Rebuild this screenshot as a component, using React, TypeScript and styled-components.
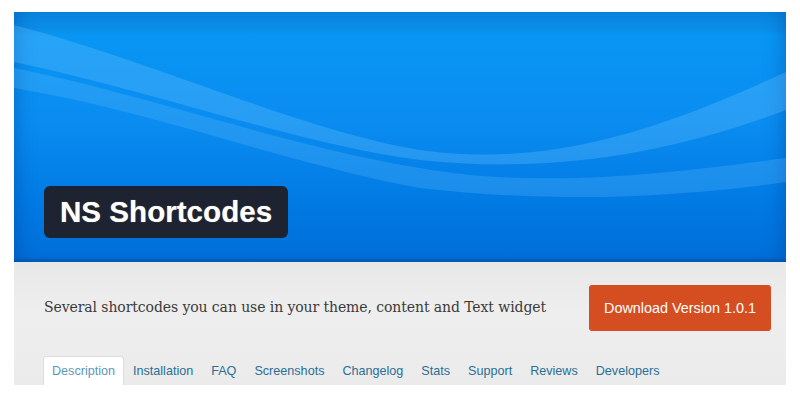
import styled, { createGlobalStyle } from "styled-components";

const GlobalStyle = createGlobalStyle`
  body {
    margin: 0;
    background: #ffffff;
    font-family: "Liberation Sans", Arial, sans-serif;
  }
`;

const tabs = [
  "Description",
  "Installation",
  "FAQ",
  "Screenshots",
  "Changelog",
  "Stats",
  "Support",
  "Reviews",
  "Developers",
];

export default function App() {
  return (
    <>
      <GlobalStyle />
      <Page>
        <Banner>
          <Waves viewBox="0 0 772 250" preserveAspectRatio="none">
            <path
              d="M0,13 C136,48 286,118 406,138 C546,158 666,108 772,60 L772,98 C666,138 546,163 406,148 C286,133 136,78 0,50 Z"
              fill="rgba(120,200,255,0.28)"
            />
            <path
              d="M0,56 C136,83 266,133 406,156 C526,178 666,160 772,146 L772,170 C666,185 546,192 406,176 C266,150 136,98 0,76 Z"
              fill="rgba(120,200,255,0.22)"
            />
          </Waves>
          <TitleBox>NS Shortcodes</TitleBox>
        </Banner>
        <Panel>
          <InfoRow>
            <Summary>
              Several shortcodes you can use in your theme, content and Text
              widget
            </Summary>
            <DownloadButton>Download Version 1.0.1</DownloadButton>
          </InfoRow>
          <Tabs>
            {tabs.map((t, i) => (
              <Tab key={t} $active={i === 0}>
                {t}
              </Tab>
            ))}
          </Tabs>
        </Panel>
      </Page>
    </>
  );
}

const Page = styled.div`
  width: 772px;
  padding: 12px 14px;
`;

const Banner = styled.div`
  position: relative;
  height: 250px;
  overflow: hidden;
  display: flex;
  flex-direction: column;
  justify-content: flex-end;
  align-items: flex-start;
  padding: 0 0 24px 30px;
  box-sizing: border-box;
  background: linear-gradient(
    to bottom,
    #0a88e0 0px,
    #0a8ce6 16px,
    #0896f4 24px,
    #0a8cf0 110px,
    #0078e2 200px,
    #006fd8 246px,
    #005fb8 248px,
    #005fb8 250px
  );
  box-shadow: inset 14px 0 18px -10px rgba(0, 60, 150, 0.35),
    inset -14px 0 18px -10px rgba(0, 60, 150, 0.35);
`;

const Waves = styled.svg`
  position: absolute;
  left: 0;
  top: 0;
  width: 100%;
  height: 100%;
`;

const TitleBox = styled.div`
  position: relative;
  height: 52px;
  display: flex;
  align-items: center;
  padding: 0 16px;
  border-radius: 6px;
  background: #1d2331;
  color: #ffffff;
  font-family: "Liberation Sans", Arial, sans-serif;
  font-weight: 700;
  font-size: 29.6px;
  text-shadow: 0 0 1px rgba(255, 230, 180, 0.6);
`;

const Panel = styled.div`
  height: 123px;
  background: linear-gradient(to bottom, #e8e8e8, #eeeeee 40%, #ebebeb);
  padding: 23px 15px 0 29px;
  box-sizing: border-box;
  display: flex;
  flex-direction: column;
  justify-content: space-between;
`;

const InfoRow = styled.div`
  display: flex;
  align-items: center;
  justify-content: space-between;
  height: 46px;
`;

const Summary = styled.p`
  margin: -2px 0 0 1px;
  font-family: "DejaVu Serif", Georgia, serif;
  font-size: 14px;
  letter-spacing: -0.09px;
  color: #3a3a3a;
`;

const DownloadButton = styled.button`
  width: 182px;
  height: 46px;
  border: none;
  border-radius: 3px;
  background: #d54e21;
  color: #ffffff;
  font-family: "Liberation Sans", Arial, sans-serif;
  font-size: 14.4px;
  padding: 0;
`;

const Tabs = styled.div`
  display: flex;
  align-items: flex-end;
`;

const Tab = styled.div<{ $active?: boolean }>`
  height: 29px;
  box-sizing: border-box;
  padding: 0 8px;
  display: flex;
  align-items: center;
  font-size: 12.6px;
  border: 1px solid ${(p) => (p.$active ? "#dcdcdc" : "transparent")};
  border-bottom: none;
  border-radius: 3px 3px 0 0;
  background: ${(p) => (p.$active ? "#ffffff" : "transparent")};
  color: ${(p) => (p.$active ? "#5b97bd" : "#2a6f96")};
`;
